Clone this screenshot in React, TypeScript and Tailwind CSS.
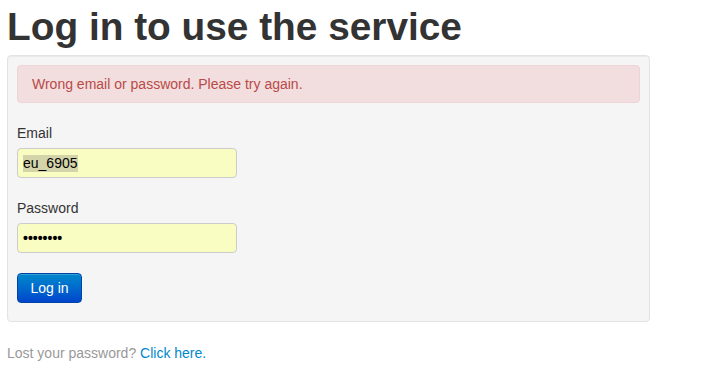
export default function App() {
  return (
    <div className="min-h-[366px] bg-white px-[7px] pt-[7px] text-[14px] leading-[20px] text-[#333] [font-family:'Liberation_Sans',Arial,sans-serif]">
      <h1 className="h-[40px] text-[38.8px] font-bold leading-[40px] text-[#333]">Log in to use the service</h1>

      <div className="mt-[8px] w-[643px] rounded-[4px] border border-[#e3e3e3] bg-[#f5f5f5] p-[9px] pb-[18px] shadow-[inset_0_1px_1px_rgba(0,0,0,0.05)]">
        <div className="rounded-[4px] border border-[#eed3d7] bg-[#f2dede] py-[8px] pl-[14px] pr-[35px] text-[#b94a48]">
          Wrong email or password. Please try again.
        </div>

        <form className="mt-[20px] flex flex-col" onSubmit={(e) => e.preventDefault()}>
          <label className="mb-[5px] block">Email</label>
          <div className="flex h-[30px] w-[220px] items-center rounded-[4px] border border-[#ccc] bg-[#fafdc2] px-[5px] text-[14px] text-black">
            <span className="bg-[#d3d4a9] leading-[17px]">eu_6905</span>
          </div>

          <label className="mb-[5px] mt-[20px] block">Password</label>
          <div className="flex h-[30px] w-[220px] items-center rounded-[4px] border border-[#ccc] bg-[#fafdc2] px-[5px] text-black">
            <span className="text-[14px] font-bold leading-[14px]">••••••••</span>
          </div>

          <div className="mt-[20px]">
            <button
              type="submit"
              className="h-[30px] w-[65px] rounded-[4px] border border-[#0044a8] bg-gradient-to-b from-[#0088cc] to-[#0044cc] text-[14px] text-white shadow-[inset_0_1px_0_rgba(255,255,255,0.2)]"
            >
              Log in
            </button>
          </div>
        </form>
      </div>

      <p className="mt-[21px] text-[#999]">
        Lost your password? <a href="#" className="text-[#0088cc]">Click here.</a>
      </p>
    </div>
  );
}
